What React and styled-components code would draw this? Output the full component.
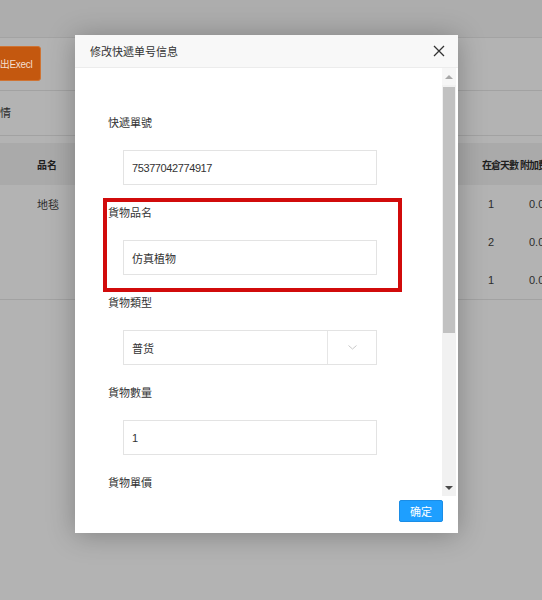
import React from "react";
import styled, { createGlobalStyle } from "styled-components";

const Global = createGlobalStyle`
  html, body { margin: 0; padding: 0; background: #b3b3b3; }
  body { font-family: "Liberation Sans", "Noto Sans CJK SC", sans-serif; }
  * { box-sizing: border-box; }
`;

const Page = styled.div`
  position: relative;
  width: 542px;
  height: 600px;
  overflow: hidden;
  background: #b3b3b3;
`;

const TopBar = styled.div`
  height: 38px;
  background: #adadad;
  border-bottom: 1px solid #a3a3a3;
`;

const Toolbar = styled.div`
  height: 53px;
  padding-top: 8px;
  display: flex;
  align-items: flex-start;
  border-bottom: 1px solid #a2a2a2;
`;

const ExportButton = styled.div`
  margin-left: -19px;
  height: 35px;
  padding: 0 8px;
  display: flex;
  align-items: center;
  background: #c4580f;
  border: 1px solid #cf7434;
  border-radius: 3px;
  color: #f4dfcf;
  font-size: 10px;
  letter-spacing: -0.3px;
`;

const FilterRow = styled.div`
  height: 45px;
  display: flex;
  align-items: center;
  border-bottom: 1px solid #a2a2a2;
  font-size: 11px;
  color: #2a2a2a;
  padding-bottom: 3px;
  overflow: hidden;
`;

const FilterText = styled.span`
  margin-left: -11px;
`;

const Table = styled.div`
  margin-top: 7px;
  width: 576px;
  border-bottom: 1px solid #a2a2a2;
`;

const TRow = styled.div`
  display: grid;
  grid-template-columns: 37px 1fr 38px 56px;
  align-items: center;
  height: ${(p) => (p.$head ? 42 : 38)}px;
  background: ${(p) => (p.$head ? "#aaaaaa" : "transparent")};
  font-size: ${(p) => (p.$head ? 10 : 11)}px;
  font-weight: ${(p) => (p.$head ? 700 : 400)};
  color: ${(p) => (p.$head ? "#1e1e1e" : "#2c2c2c")};
`;

const Cell = styled.span`
  padding-left: ${(p) => p.$pl || 0}px;
  letter-spacing: ${(p) => (p.$squeeze ? "-1px" : "0")};
  white-space: nowrap;
  overflow: hidden;
`;

const Modal = styled.div`
  position: absolute;
  left: 75px;
  top: 35px;
  width: 383px;
  height: 498px;
  background: #fff;
  box-shadow: 0 2px 26px rgba(0, 0, 0, 0.28);
  display: flex;
  flex-direction: column;
`;

const ModalHeader = styled.div`
  height: 33px;
  flex: none;
  display: flex;
  align-items: center;
  justify-content: space-between;
  padding: 0 13px 0 15px;
  background: #f8f8f8;
  border-bottom: 1px solid #ececec;
`;

const Title = styled.span`
  font-size: 11px;
  color: #333;
`;

const Close = styled.svg`
  width: 12px;
  height: 12px;
  display: block;
`;

const ModalBody = styled.div`
  height: 428px;
  flex: none;
  display: flex;
  padding-right: 2px;
`;

const Content = styled.div`
  position: relative;
  flex: 1;
  overflow: hidden;
  padding: 45px 0 0 33px;
`;

const Field = styled.div`
  margin-bottom: 18px;
`;

const Label = styled.div`
  height: 20px;
  line-height: 20px;
  font-size: 11px;
  color: #333;
  margin-bottom: 17px;
`;

const InputBox = styled.div`
  margin-left: 15px;
  width: 254px;
  height: 35px;
  border: 1px solid #e3e3e3;
  display: flex;
  align-items: stretch;
  font-size: 11px;
  color: #333;
`;

const Value = styled.div`
  flex: 1;
  display: flex;
  align-items: center;
  padding-left: ${(p) => p.$pl || 8}px;
  letter-spacing: ${(p) => (p.$tight ? "-0.4px" : "0")};
`;

const ArrowCell = styled.div`
  width: 49px;
  border-left: 1px solid #e6e6e6;
  display: flex;
  align-items: center;
  justify-content: center;
`;

const Highlight = styled.div`
  position: absolute;
  left: 28px;
  top: 130px;
  width: 299px;
  height: 94px;
  border: 4px solid #d10b0b;
  pointer-events: none;
`;

const Scrollbar = styled.div`
  width: 14px;
  flex: none;
  display: flex;
  flex-direction: column;
  background: #f1f1f1;
`;

const ScrollBtn = styled.div`
  height: 17px;
  flex: none;
  display: flex;
  align-items: center;
  justify-content: center;
  background: ${(p) => (p.$up ? "#f6f6f6" : "#f1f1f1")};
`;

const Tri = styled.div`
  width: 0;
  height: 0;
  border-left: 4px solid transparent;
  border-right: 4px solid transparent;
  ${(p) =>
    p.$up
      ? "border-bottom: 4px solid #a8a8a8;"
      : "border-top: 4px solid #4a4a4a;"}
`;

const Thumb = styled.div`
  margin: 2px 1px 0;
  height: 246px;
  background: #c1c1c1;
`;

const Track = styled.div`
  flex: 1;
`;

const Footer = styled.div`
  flex: 1;
  display: flex;
  justify-content: flex-end;
  align-items: flex-start;
  padding: 4px 15px 0 0;
`;

const ConfirmButton = styled.div`
  width: 44px;
  height: 22px;
  background: #1e9fff;
  border: 1px solid #1b8de6;
  border-radius: 2px;
  color: #fff;
  font-size: 11px;
  display: flex;
  align-items: center;
  justify-content: center;
`;

const rows = [
  { name: "地毯", days: "1", extra: "0.00" },
  { name: "", days: "2", extra: "0.00" },
  { name: "", days: "1", extra: "0.00" },
];

const fields = [
  { label: "快遞單號", value: "75377042774917", tight: true },
  { label: "貨物品名", value: "仿真植物" },
  { label: "貨物類型", value: "普货", select: true },
  { label: "貨物數量", value: "1" },
];

export default function App() {
  return (
    <>
      <Global />
      <Page>
        <TopBar />
        <Toolbar>
          <ExportButton>导出Execl</ExportButton>
        </Toolbar>
        <FilterRow>
          <FilterText>详情</FilterText>
        </FilterRow>
        <Table>
          <TRow $head>
            <span />
            <Cell>品名</Cell>
            <Cell $squeeze>在倉天數</Cell>
            <Cell $squeeze>附加费用</Cell>
          </TRow>
          {rows.map((r, i) => (
            <TRow key={i}>
              <span />
              <Cell>{r.name}</Cell>
              <Cell $pl={6}>{r.days}</Cell>
              <Cell $pl={9}>{r.extra}</Cell>
            </TRow>
          ))}
        </Table>

        <Modal>
          <ModalHeader>
            <Title>修改快遞单号信息</Title>
            <Close viewBox="0 0 12 12">
              <path d="M1 1 L11 11 M11 1 L1 11" stroke="#333" strokeWidth="1.3" fill="none" />
            </Close>
          </ModalHeader>
          <ModalBody>
            <Content>
              {fields.map((f) => (
                <Field key={f.label}>
                  <Label>{f.label}</Label>
                  <InputBox>
                    <Value $tight={f.tight}>{f.value}</Value>
                    {f.select && (
                      <ArrowCell>
                        <svg width="9" height="5" viewBox="0 0 9 5">
                          <path d="M0.5 0.5 L4.5 4 L8.5 0.5" stroke="#c8c8c8" strokeWidth="1" fill="none" />
                        </svg>
                      </ArrowCell>
                    )}
                  </InputBox>
                </Field>
              ))}
              <Field>
                <Label>貨物單價</Label>
              </Field>
              <Highlight />
            </Content>
            <Scrollbar>
              <ScrollBtn $up>
                <Tri $up />
              </ScrollBtn>
              <Thumb />
              <Track />
              <ScrollBtn>
                <Tri />
              </ScrollBtn>
            </Scrollbar>
          </ModalBody>
          <Footer>
            <ConfirmButton>确定</ConfirmButton>
          </Footer>
        </Modal>
      </Page>
    </>
  );
}
